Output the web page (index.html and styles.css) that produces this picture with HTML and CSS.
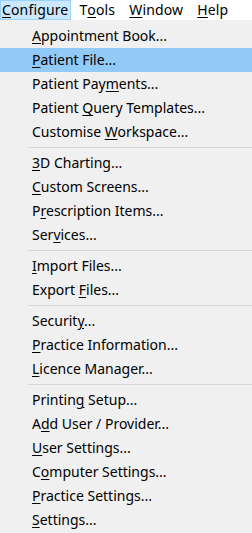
FILE: index.html
```html
<!DOCTYPE html>
<html>
<head>
<meta charset="utf-8">
<link rel="stylesheet" href="styles.css">
</head>
<body>
<div class="menubar">
  <span class="top active"><u>C</u>onfigure</span>
  <span class="top">T<u>o</u>ols</span>
  <span class="top"><u>W</u>indow</span>
  <span class="top"><u>H</u>elp</span>
</div>
<div class="menu">
  <div class="item"><u>A</u>ppointment Book...</div>
  <div class="item hl"><u>P</u>atient File...</div>
  <div class="item">Patient Pay<u>m</u>ents...</div>
  <div class="item">Patient <u>Q</u>uery Templates...</div>
  <div class="item">Customise <u>W</u>orkspace...</div>
  <div class="sep"></div>
  <div class="item"><u>3</u>D Charting...</div>
  <div class="item"><u>C</u>ustom Screens...</div>
  <div class="item">P<u>r</u>escription Items...</div>
  <div class="item">Ser<u>v</u>ices...</div>
  <div class="sep"></div>
  <div class="item"><u>I</u>mport Files...</div>
  <div class="item">Export <u>F</u>iles...</div>
  <div class="sep"></div>
  <div class="item">Securit<u>y</u>...</div>
  <div class="item"><u>P</u>ractice Information...</div>
  <div class="item"><u>L</u>icence Manager...</div>
  <div class="sep"></div>
  <div class="item">Printin<u>g</u> Setup...</div>
  <div class="item">A<u>d</u>d User / Provider...</div>
  <div class="item"><u>U</u>ser Settings...</div>
  <div class="item">C<u>o</u>mputer Settings...</div>
  <div class="item"><u>P</u>ractice Settings...</div>
  <div class="item"><u>S</u>ettings...</div>
</div>
</body>
</html>
```
FILE: styles.css
```css
html, body {
  margin: 0;
  padding: 0;
  background: #f0f0f0;
  font-family: "Noto Sans", "Open Sans", sans-serif;
  font-size: 14px;
  color: #000;
  overflow: hidden;
}
u {
  text-decoration-thickness: 1px;
  text-underline-offset: 2px;
}
.menubar {
  display: flex;
  height: 20px;
  background: #fff;
  border-bottom: 1px solid #f0f0f0;
}
.top {
  display: flex;
  align-items: center;
  height: 20px;
  box-sizing: border-box;
  padding: 0 6px 0 8px;
  line-height: 20px;
  letter-spacing: 0.15px;
}
.top.active {
  background: #cce8ff;
  border: 1px solid #99d1ff;
  padding: 0 2px 0 1px;
}
.menu {
  padding-top: 3px;
  background: #f0f0f0;
}
.item {
  height: 24px;
  line-height: 24px;
  padding-left: 32px;
  white-space: nowrap;
}
.item.hl {
  background: #91c9f7;
}
.sep {
  height: 7px;
  margin-left: 28px;
  display: flex;
  align-items: center;
}
.sep::before {
  content: "";
  flex: 1;
  height: 1px;
  background: #d7d7d7;
}
```
